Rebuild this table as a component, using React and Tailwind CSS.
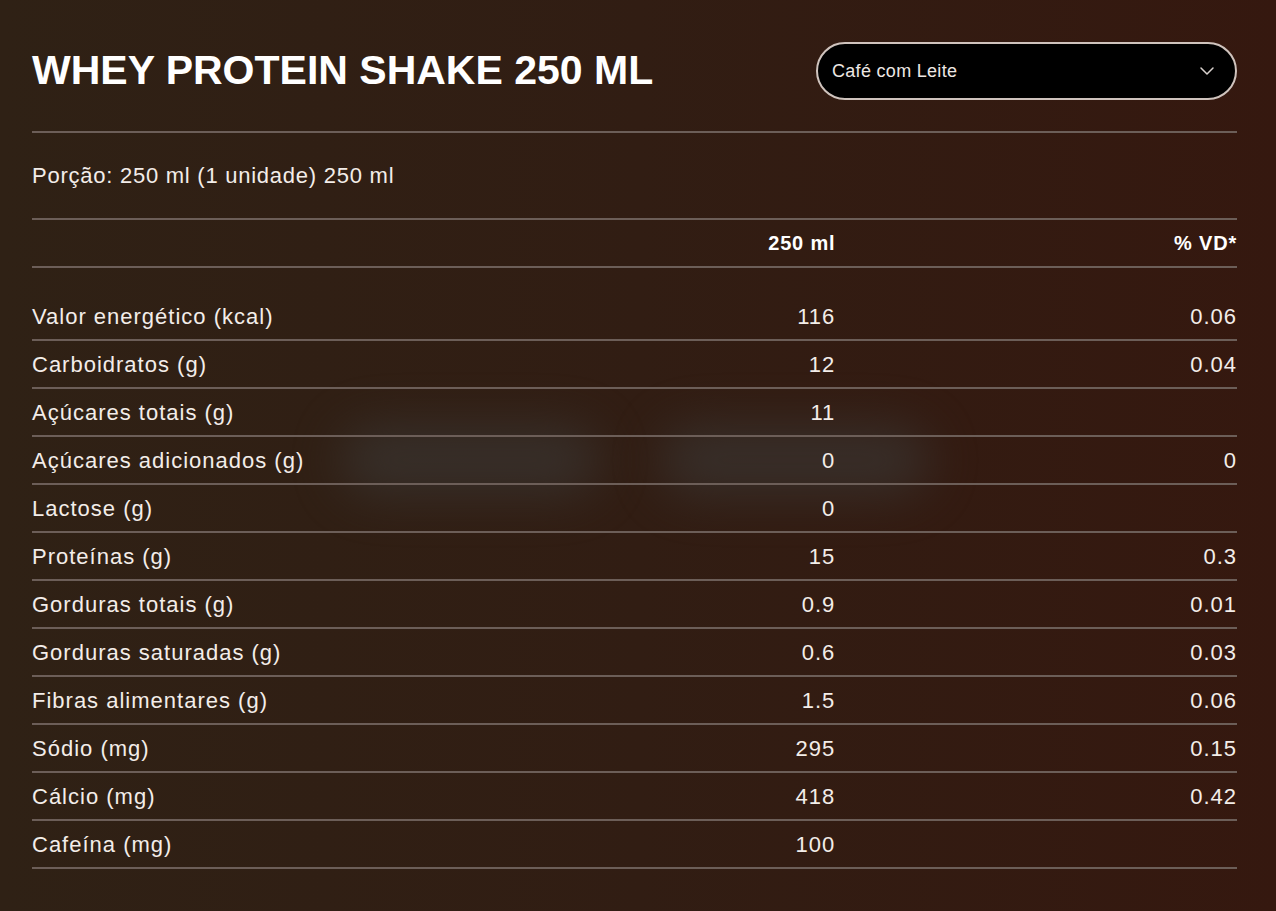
import { ChevronDown } from "lucide-react";

const ROWS = [
  ["Valor energético (kcal)", "116", "0.06"],
  ["Carboidratos (g)", "12", "0.04"],
  ["Açúcares totais (g)", "11", ""],
  ["Açúcares adicionados (g)", "0", "0"],
  ["Lactose (g)", "0", ""],
  ["Proteínas (g)", "15", "0.3"],
  ["Gorduras totais (g)", "0.9", "0.01"],
  ["Gorduras saturadas (g)", "0.6", "0.03"],
  ["Fibras alimentares (g)", "1.5", "0.06"],
  ["Sódio (mg)", "295", "0.15"],
  ["Cálcio (mg)", "418", "0.42"],
  ["Cafeína (mg)", "100", ""],
];

const font = { fontFamily: '"Liberation Sans", Arial, sans-serif' };

export default function App() {
  return (
    <div
      className="relative min-h-[911px] w-full overflow-hidden bg-gradient-to-r from-[#2f2115] via-[#311d13] to-[#35180f] text-[#f3ede9]"
      style={font}
    >
      {/* soft blurred blobs in the backdrop */}
      <div className="pointer-events-none absolute left-[340px] top-[425px] h-[70px] w-[260px] rounded-full bg-[#3a3633] opacity-70 blur-xl" />
      <div className="pointer-events-none absolute left-[660px] top-[425px] h-[70px] w-[270px] rounded-full bg-[#3a3633] opacity-70 blur-xl" />

      <div className="relative pl-8 pr-[39px] pt-[42px]">
        <div className="flex h-[58px] items-center justify-between">
          <h1 className="-mt-[2px] text-[41px] font-bold leading-none text-white">
            WHEY PROTEIN SHAKE 250 ML
          </h1>
          <button className="flex h-[58px] w-[421px] items-center justify-between rounded-full border-2 border-[#cfc3bd] bg-black pl-[14px] pr-[16px] text-[18px] tracking-[0.3px] text-[#eee8e4]">
            <span>Café com Leite</span>
            <ChevronDown className="h-6 w-6 text-[#d9d2ce]" strokeWidth={1.5} />
          </button>
        </div>

        <div className="mt-[31px] border-t-2 border-[#6c5e58]">
          <div className="flex h-[87px] items-center border-b-2 border-[#6c5e58] text-[22px] tracking-[0.75px]">
            Porção: 250 ml (1 unidade) 250 ml
          </div>

          <div className="grid h-[48px] grid-cols-3 items-center border-b-2 border-[#6c5e58] text-[20px] font-bold tracking-[0.8px] text-white">
            <div />
            <div className="text-right">250 ml</div>
            <div className="text-right">% VD*</div>
          </div>

          <div className="pt-[25px]">
            {ROWS.map(([label, amount, vd]) => (
              <div
                key={label}
                className="grid h-[48px] grid-cols-3 items-center border-b-2 border-[#6c5e58] text-[22px] tracking-[1px]"
              >
                <div>{label}</div>
                <div className="text-right">{amount}</div>
                <div className="text-right">{vd}</div>
              </div>
            ))}
          </div>
        </div>
      </div>
    </div>
  );
}
